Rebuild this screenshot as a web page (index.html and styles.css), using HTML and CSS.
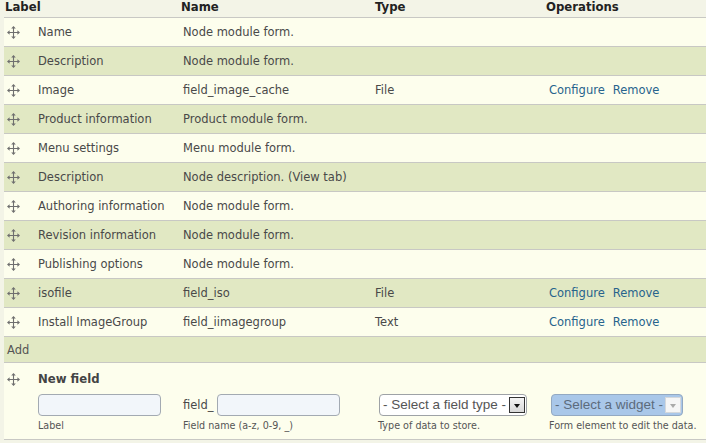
FILE: index.html
```html
<!DOCTYPE html>
<html>
<head>
<meta charset="utf-8">
<link rel="stylesheet" href="styles.css">
</head>
<body>
<svg width="0" height="0" class="defs">
  <defs>
    <symbol id="drag" viewBox="0 0 13 13">
      <path d="M6.5 2v9M2 6.5h9" stroke="#6f6f6f" stroke-width="1.1" fill="none"/>
      <path d="M6.5 0l-2.3 2.6h4.6zM6.5 13l-2.3-2.6h4.6zM0 6.5l2.6-2.3v4.6zM13 6.5l-2.6-2.3v4.6z" fill="#6f6f6f"/>
    </symbol>
  </defs>
</svg>
<table class="fields">
  <colgroup>
    <col class="c1"><col class="c2"><col class="c3"><col class="c4">
  </colgroup>
  <thead>
    <tr>
      <th class="h-label">Label</th>
      <th class="h-name">Name</th>
      <th class="h-type">Type</th>
      <th class="h-ops">Operations</th>
    </tr>
  </thead>
  <tbody>
    <tr class="odd"><td><span class="lab"><svg class="drag"><use href="#drag"/></svg>Name</span></td><td>Node module form.</td><td></td><td></td></tr>
    <tr class="even"><td><span class="lab"><svg class="drag"><use href="#drag"/></svg>Description</span></td><td>Node module form.</td><td></td><td></td></tr>
    <tr class="odd"><td><span class="lab"><svg class="drag"><use href="#drag"/></svg>Image</span></td><td>field_image_cache</td><td>File</td><td><a href="#">Configure</a><a href="#">Remove</a></td></tr>
    <tr class="even"><td><span class="lab"><svg class="drag"><use href="#drag"/></svg>Product information</span></td><td>Product module form.</td><td></td><td></td></tr>
    <tr class="odd"><td><span class="lab"><svg class="drag"><use href="#drag"/></svg>Menu settings</span></td><td>Menu module form.</td><td></td><td></td></tr>
    <tr class="even"><td><span class="lab"><svg class="drag"><use href="#drag"/></svg>Description</span></td><td>Node description. (View tab)</td><td></td><td></td></tr>
    <tr class="odd"><td><span class="lab"><svg class="drag"><use href="#drag"/></svg>Authoring information</span></td><td>Node module form.</td><td></td><td></td></tr>
    <tr class="even"><td><span class="lab"><svg class="drag"><use href="#drag"/></svg>Revision information</span></td><td>Node module form.</td><td></td><td></td></tr>
    <tr class="odd"><td><span class="lab"><svg class="drag"><use href="#drag"/></svg>Publishing options</span></td><td>Node module form.</td><td></td><td></td></tr>
    <tr class="even"><td><span class="lab"><svg class="drag"><use href="#drag"/></svg>isofile</span></td><td>field_iso</td><td>File</td><td><a href="#">Configure</a><a href="#">Remove</a></td></tr>
    <tr class="odd"><td><span class="lab"><svg class="drag"><use href="#drag"/></svg>Install ImageGroup</span></td><td>field_iimagegroup</td><td>Text</td><td><a href="#">Configure</a><a href="#">Remove</a></td></tr>
    <tr class="even add"><td colspan="4">Add</td></tr>
    <tr class="odd newfield">
      <td class="nf1">
        <div class="nf-wrap">
          <svg class="drag"><use href="#drag"/></svg>
          <div class="nf-col">
            <div class="nf-title">New field</div>
            <input class="txt" type="text">
            <div class="desc">Label</div>
          </div>
        </div>
      </td>
      <td class="nfb">
        <div class="prefix"><span>field_</span><input class="txt" type="text"></div>
        <div class="desc">Field name (a-z, 0-9, _)</div>
      </td>
      <td class="nfb">
        <div class="sel sel-type"><span>- Select a field type -</span><span class="arrow"></span></div>
        <div class="desc d3">Type of data to store.</div>
      </td>
      <td class="nfb">
        <div class="sel sel-widget"><span>- Select a widget -</span><span class="arrow"></span></div>
        <div class="desc">Form element to edit the data.</div>
      </td>
    </tr>
  </tbody>
</table>
</body>
</html>
```
FILE: styles.css
```css
html, body {
  margin: 0;
  padding: 0;
  background: #f3f4e7;
}
body {
  padding-left: 4px;
  font-family: "DejaVu Sans", Verdana, sans-serif;
  font-size: 11.5px;
  color: #494949;
}
.defs { position: absolute; }
.fields {
  width: 702px;
  border-collapse: collapse;
  table-layout: fixed;
}
.c1 { width: 174px; }
.c2 { width: 192px; }
.c3 { width: 174px; }
.c4 { width: 162px; }

th {
  text-align: left;
  font-weight: bold;
  font-size: 11.7px;
  color: #222;
  height: 17px;
  padding: 0 0 0 3px;
  line-height: 14px;
  vertical-align: top;
  border-bottom: 1px solid #c8c8c4;
}
th.h-label { padding-left: 1px; }
th.h-type { padding-left: 5px; }
th.h-ops { padding-left: 2px; }

td {
  height: 28px;
  padding: 0 0 0 5px;
  vertical-align: middle;
  border-bottom: 1px solid #c8c8c4;
  white-space: nowrap;
  line-height: 16px;
}
tr.odd td { background: #fdfeed; }
tr.even td { background: #e1e8c3; }

td:first-child { padding-left: 3px; }
.lab { display: flex; align-items: center; }
.drag {
  width: 13px;
  height: 13px;
  flex: none;
  margin-right: 18px;
  margin-top: 1px;
}

a {
  color: #27638c;
  text-decoration: none;
  margin-right: 8px;
}

tr.add td {
  height: 25px;
  padding-left: 3px;
  color: #555;
}

tr.newfield td {
  height: auto;
  padding-bottom: 7px;
}
td.nf1 { vertical-align: top; padding-top: 8px; }
td.nfb { vertical-align: bottom; }
.nf-wrap { display: flex; align-items: flex-start; }
.nf-wrap .drag { margin-top: 2px; }
.nf-col { display: flex; flex-direction: column; align-items: flex-start; }
.nf-title {
  font-weight: bold;
  font-size: 11.7px;
  color: #444;
  line-height: 16px;
  margin-bottom: 7px;
}
.txt {
  width: 123px;
  height: 22px;
  box-sizing: border-box;
  border: 1px solid #a3aab2;
  border-radius: 4px;
  background: #f2f6fa;
  margin: 0;
  padding: 0;
}
.desc {
  font-size: 9.6px;
  line-height: 12px;
  margin-top: 4px;
  color: #555;
}
.prefix { display: flex; align-items: center; gap: 3px; }
.prefix span { line-height: 16px; }

.sel {
  display: flex;
  align-items: center;
  justify-content: space-between;
  box-sizing: border-box;
  height: 22px;
  border-radius: 4px;
  font-family: "Liberation Sans", Arial, sans-serif;
  font-size: 13.5px;
  padding: 0 1px 0 3px;
}
.sel-type {
  width: 148px;
  margin-left: 4px;
  background: #fff;
  border: 1px solid #9ea2a6;
  color: #555;
}
.sel-widget {
  width: 132px;
  margin-left: 2px;
  background: #a9c7e9;
  border: 1px solid #93a9c2;
  color: #5c6b7c;
}
.arrow {
  position: relative;
  width: 16px;
  height: 16px;
  box-sizing: border-box;
  flex: none;
}
.sel-type .arrow {
  border: 1px solid #333;
  background: linear-gradient(#f4f4f4, #d8d8d8);
}
.sel-widget .arrow {
  border: 1px solid #d4d8dc;
  background: #f6f6f6;
}
.arrow::after {
  content: "";
  position: absolute;
  left: 4px;
  top: 6px;
  border-left: 3.5px solid transparent;
  border-right: 3.5px solid transparent;
  border-top: 4px solid #111;
}
.sel-widget .arrow::after { border-top-color: #aaa; }
.d3 { margin-left: 3px; }
```
